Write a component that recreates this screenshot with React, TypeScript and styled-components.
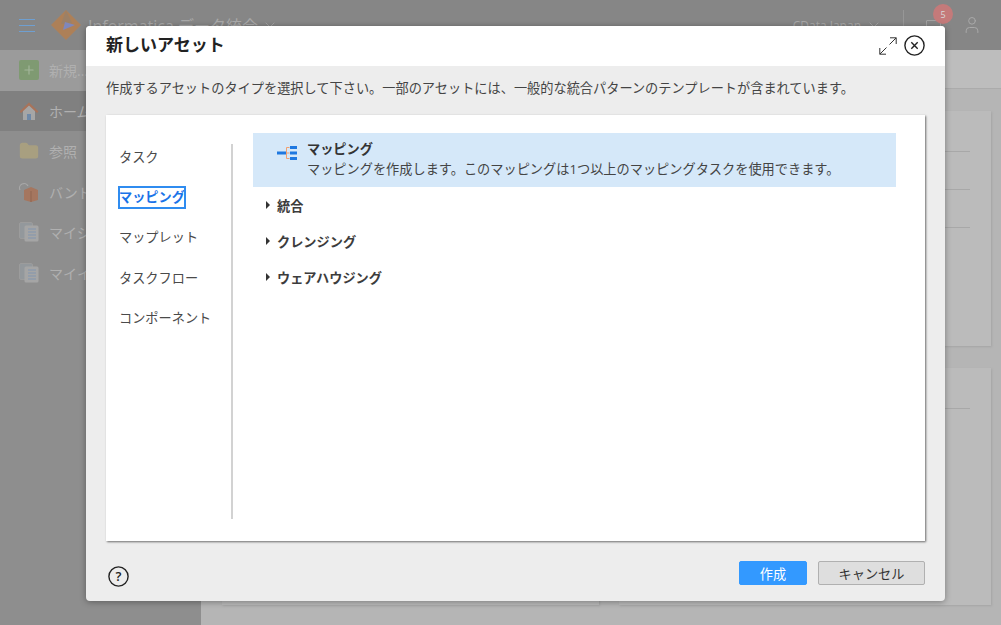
import React from 'react';
import styled, { createGlobalStyle } from 'styled-components';
import { ChevronDown, Plus, User, Folder } from 'lucide-react';

const GlobalStyle = createGlobalStyle`
  html, body {
    margin: 0;
    padding: 0;
    width: 1001px;
    height: 625px;
    overflow: hidden;
    background: #b5b5b5;
    font-family: 'Open Sans', 'Noto Sans CJK JP', sans-serif;
  }
  * { box-sizing: border-box; }
`;

const Page = styled.div`
  position: relative;
  width: 1001px;
  height: 625px;
  overflow: hidden;
  display: flex;
  flex-direction: column;
`;

const TopBar = styled.header`
  height: 50px;
  flex: none;
  background: #868686;
  display: flex;
  align-items: center;
  padding: 0 19px 0 19px;
  color: #a9a9a9;
`;

const Burger = styled.div`
  width: 16px;
  height: 13px;
  flex: none;
  align-self: flex-start;
  margin: 19px 16px 0 0;
  border-top: 1px solid #6f9fd0;
  border-bottom: 1px solid #6f9fd0;
  position: relative;
  &::after {
    content: '';
    position: absolute;
    left: 0;
    right: 0;
    top: 5px;
    height: 1px;
    background: #6f9fd0;
  }
`;

const BrandName = styled.span`
  margin-left: 7px;
  font-size: 16px;
  display: flex;
  align-items: center;
  gap: 4px;
  white-space: nowrap;
`;

const TopRight = styled.div`
  margin-left: auto;
  display: flex;
  align-items: center;
`;

const OrgName = styled.span`
  font-size: 12px;
  display: flex;
  align-items: center;
  gap: 5px;
  padding-right: 21px;
  border-right: 1px solid #979797;
  height: 30px;
`;

const BellBox = styled.div`
  position: relative;
  margin: 0 21px 0 22px;
  display: flex;
`;

const BellShape = styled.span`
  width: 15px;
  height: 14px;
  margin-top: 4px;
  border: 1px solid #a2a2a2;
  border-radius: 1px;
`;

const Badge = styled.span`
  position: absolute;
  top: -12px;
  left: 7px;
  width: 20px;
  height: 20px;
  border-radius: 50%;
  background: #c47a7a;
  color: #d8d8d8;
  font-size: 9px;
  display: flex;
  align-items: center;
  justify-content: center;
`;

const Body = styled.div`
  flex: 1;
  display: flex;
  min-height: 0;
`;

const SideNav = styled.nav`
  width: 201px;
  flex: none;
  background: #8e8e8e;
`;

const NavRow = styled.div<{ $tone?: 'light' | 'dark' }>`
  height: 40.5px;
  display: flex;
  align-items: center;
  gap: 10px;
  padding-left: 19px;
  font-size: 14px;
  color: #b0b0b0;
  background: ${(p) =>
    p.$tone === 'light' ? '#9b9b9b' : p.$tone === 'dark' ? '#808080' : 'transparent'};
`;

const PlusTile = styled.span`
  width: 20px;
  height: 20px;
  border-radius: 2px;
  background: #7f9a72;
  color: #a3b69a;
  display: flex;
  align-items: center;
  justify-content: center;
`;

const Content = styled.main`
  flex: 1;
  display: flex;
  flex-direction: column;
`;

const TabStrip = styled.div`
  height: 39px;
  flex: none;
  background: #bdbdbd;
  border-bottom: 1px solid #ababab;
`;

const CardGrid = styled.div`
  flex: 1;
  display: grid;
  grid-template-columns: 377px 372px;
  grid-template-rows: 235px 237px;
  column-gap: 20px;
  row-gap: 22px;
  padding: 22px 10px 0 21px;
`;

const BgCard = styled.div`
  background: #bbb;
  box-shadow: 1px 1px 2px #a5a5a5;
  padding: 40px 21px 0;
`;

const CardRule = styled.div`
  height: 1px;
  margin-bottom: 37px;
  background: #a8a8a8;
`;

const Dialog = styled.section`
  position: absolute;
  left: 86px;
  top: 26px;
  width: 859px;
  height: 575px;
  background: #ededed;
  border-radius: 4px;
  box-shadow: 0 1px 6px rgba(0, 0, 0, 0.35);
  display: flex;
  flex-direction: column;
  overflow: hidden;
`;

const DialogHeader = styled.div`
  height: 40px;
  flex: none;
  background: #fff;
  display: flex;
  align-items: center;
  justify-content: space-between;
  padding: 0 20px;
`;

const DialogTitle = styled.h1`
  margin: 0 0 6px;
  font-size: 17px;
  font-weight: 700;
  color: #222;
`;

const HeaderTools = styled.div`
  display: flex;
  align-items: center;
  gap: 7px;
  margin-bottom: 1px;
`;

const Intro = styled.p`
  margin: 0;
  height: 49px;
  flex: none;
  padding: 12px 20px 0;
  font-size: 13.2px;
  line-height: 20px;
  color: #444;
  white-space: nowrap;
`;

const Panel = styled.div`
  height: 426px;
  flex: none;
  margin: 0 20px;
  background: #fff;
  box-shadow: 1px 1px 2px rgba(0, 0, 0, 0.55);
  display: flex;
  padding: 18px 29px 22px 0;
`;

const TypeList = styled.ul`
  list-style: none;
  margin: 11px 0 0;
  padding: 3px 0 0 13px;
  width: 127px;
  flex: none;
  height: 375px;
  border-right: 2px solid #d2d2d2;
  display: flex;
  flex-direction: column;
  gap: 19.2px;
`;

const TypeItem = styled.li<{ $active?: boolean }>`
  width: fit-content;
  height: 21px;
  line-height: 21px;
  font-size: 13.2px;
  white-space: nowrap;
  color: ${(p) => (p.$active ? '#1a73e8' : '#4a4a4a')};
  font-weight: ${(p) => (p.$active ? 700 : 400)};
  ${(p) => (p.$active ? 'outline: 2px solid #2f8cf0; outline-offset: -1px;' : '')}
`;

const Templates = styled.div`
  flex: 1;
  margin-left: 20px;
  display: flex;
  flex-direction: column;
`;

const SelectedRow = styled.div`
  height: 54px;
  flex: none;
  background: #d5e8f9;
  display: flex;
  padding: 6px 0 0 23px;
  gap: 9px;
`;

const RowText = styled.div`
  display: flex;
  flex-direction: column;
  color: #444;
  font-size: 13.2px;
  line-height: 20px;
  white-space: nowrap;
`;

const RowTitle = styled.span`
  font-weight: 700;
  color: #333;
`;

const GroupRow = styled.div`
  height: 36px;
  display: flex;
  align-items: center;
  gap: 7px;
  padding-left: 13px;
  font-size: 13.2px;
  font-weight: 700;
  color: #3c3c3c;
`;

const Caret = styled.span`
  width: 0;
  height: 0;
  border-left: 4px solid #333;
  border-top: 4px solid transparent;
  border-bottom: 4px solid transparent;
`;

const Footer = styled.div`
  flex: 1;
  display: flex;
  align-items: flex-start;
  justify-content: space-between;
  padding: 20px 20px 0 22px;
`;

const HelpSlot = styled.div`
  margin-top: 5px;
  display: flex;
`;

const ButtonRow = styled.div`
  display: flex;
  gap: 11px;
`;

const ActionButton = styled.button<{ $primary?: boolean }>`
  height: 24px;
  width: ${(p) => (p.$primary ? '68px' : '107px')};
  padding: 0;
  border-radius: 2px;
  border: 1px solid ${(p) => (p.$primary ? '#3399ff' : '#b0b0b0')};
  background: ${(p) => (p.$primary ? '#3399ff' : '#dedede')};
  color: ${(p) => (p.$primary ? '#fff' : '#333')};
  font-family: inherit;
  font-size: 13.2px;
  font-weight: 400;
`;

const Logo = () => (
  <svg width="30" height="30" viewBox="0 0 30 30">
    <path d="M15 0 L30 15 L15 30 L0 15 Z" fill="#ad8058" />
    <path d="M15 0 L21 13 L10 14 Z" fill="#9c8066" />
    <path d="M14 12 L24 15 L12 20 Z" fill="#7f87bb" />
  </svg>
);

const HouseIcon = () => (
  <svg width="20" height="20" viewBox="0 0 20 20">
    <path d="M4 9v10h12V9L10 4z" fill="#a6a6a6" />
    <path d="M0.5 10.5L10 1.5l9.5 9-1.5 1.5L10 4.5 2 12z" fill="#a8735a" />
    <rect x="8" y="13" width="4" height="6" fill="#6f89a8" />
  </svg>
);

const PageIcon = () => (
  <svg width="20" height="20" viewBox="0 0 20 20">
    <rect x="0.5" y="0.5" width="13" height="16" rx="1.5" fill="#93989c" stroke="#9c9c9c" />
    <rect x="5.5" y="3.5" width="14" height="16" rx="1.5" fill="#a5a5a5" />
    <path d="M9 7h8M9 10h8M9 13h8M9 16h8" stroke="#8296b0" strokeWidth="1.2" />
  </svg>
);

const BundleIcon = () => (
  <svg width="20" height="20" viewBox="0 0 20 20">
    <path d="M1 8a4 4 0 0 1 8 -4" fill="none" stroke="#a8a8a8" strokeWidth="1.2" />
    <path d="M5 8l7-3 7 3v10l-7 2-7-2z" fill="#a5765f" />
    <path d="M12 9v11" stroke="#8f6450" />
  </svg>
);

const MappingIcon = () => (
  <svg width="22" height="18" viewBox="0 0 22 18" style={{ marginTop: 5 }}>
    <path d="M10.5 9h3M10.5 3.5v11M10.5 3.5h3M10.5 14.5h3" stroke="#f0a070" strokeWidth="1" fill="none" />
    <rect x="1" y="7.5" width="9" height="3" fill="#1f78e0" />
    <rect x="14" y="2" width="7" height="3" fill="#1f78e0" />
    <rect x="14" y="7.5" width="7" height="3" fill="#1f78e0" />
    <rect x="14" y="13" width="7" height="3" fill="#1f78e0" />
  </svg>
);

const ExpandIcon = () => (
  <svg width="18" height="18" viewBox="0 0 18 18" fill="none" stroke="#333" strokeWidth="1">
    <path d="M0.8 17.2L7.5 10.5M10.5 7.5L17.2 0.8M11 0.8h6.2v6.2M0.8 11v6.2H7" />
  </svg>
);

const CloseIcon = () => (
  <svg width="21" height="21" viewBox="0 0 21 21" fill="none" stroke="#222">
    <circle cx="10.5" cy="10.5" r="9.6" strokeWidth="1.4" />
    <path d="M7.3 7.3l6.4 6.4M13.7 7.3l-6.4 6.4" strokeWidth="1.4" />
  </svg>
);

const HelpIcon = () => (
  <svg width="21" height="21" viewBox="0 0 21 21">
    <circle cx="10.5" cy="10.5" r="9.6" fill="none" stroke="#222" strokeWidth="1.4" />
    <text x="10.5" y="15" textAnchor="middle" fontSize="13" fontWeight="600" fontFamily="Open Sans, sans-serif" fill="#222">?</text>
  </svg>
);

const types = ['タスク', 'マッピング', 'マップレット', 'タスクフロー', 'コンポーネント'];
const groups = ['統合', 'クレンジング', 'ウェアハウジング'];

export default function App() {
  return (
    <Page>
      <GlobalStyle />
      <TopBar>
        <Burger />
        <Logo />
        <BrandName>
          Informatica データ統合 <ChevronDown size={16} strokeWidth={1.2} />
        </BrandName>
        <TopRight>
          <OrgName>
            CData Japan <ChevronDown size={16} strokeWidth={1.2} />
          </OrgName>
          <BellBox>
            <BellShape />
            <Badge>5</Badge>
          </BellBox>
          <User size={20} strokeWidth={1.2} />
        </TopRight>
      </TopBar>
      <Body>
        <SideNav>
          <NavRow $tone="light">
            <PlusTile>
              <Plus size={14} />
            </PlusTile>
            新規...
          </NavRow>
          <NavRow $tone="dark">
            <HouseIcon />
            ホーム
          </NavRow>
          <NavRow>
            <Folder size={20} color="#a89f80" fill="#a89f80" />
            参照
          </NavRow>
          <NavRow>
            <BundleIcon />
            バンドル
          </NavRow>
          <NavRow>
            <PageIcon />
            マイジョブ
          </NavRow>
          <NavRow>
            <PageIcon />
            マイインポート
          </NavRow>
        </SideNav>
        <Content>
          <TabStrip />
          <CardGrid>
            <BgCard />
            <BgCard>
              <CardRule />
              <CardRule />
              <CardRule />
            </BgCard>
            <BgCard />
            <BgCard>
              <CardRule />
            </BgCard>
          </CardGrid>
        </Content>
      </Body>

      <Dialog>
        <DialogHeader>
          <DialogTitle>新しいアセット</DialogTitle>
          <HeaderTools>
            <ExpandIcon />
            <CloseIcon />
          </HeaderTools>
        </DialogHeader>
        <Intro>
          作成するアセットのタイプを選択して下さい。一部のアセットには、一般的な統合パターンのテンプレートが含まれています。
        </Intro>
        <Panel>
          <TypeList>
            {types.map((t) => (
              <TypeItem key={t} $active={t === 'マッピング'}>
                {t}
              </TypeItem>
            ))}
          </TypeList>
          <Templates>
            <SelectedRow>
              <MappingIcon />
              <RowText>
                <RowTitle>マッピング</RowTitle>
                マッピングを作成します。このマッピングは1つ以上のマッピングタスクを使用できます。
              </RowText>
            </SelectedRow>
            {groups.map((g) => (
              <GroupRow key={g}>
                <Caret />
                {g}
              </GroupRow>
            ))}
          </Templates>
        </Panel>
        <Footer>
          <HelpSlot>
            <HelpIcon />
          </HelpSlot>
          <ButtonRow>
            <ActionButton $primary>作成</ActionButton>
            <ActionButton>キャンセル</ActionButton>
          </ButtonRow>
        </Footer>
      </Dialog>
    </Page>
  );
}
